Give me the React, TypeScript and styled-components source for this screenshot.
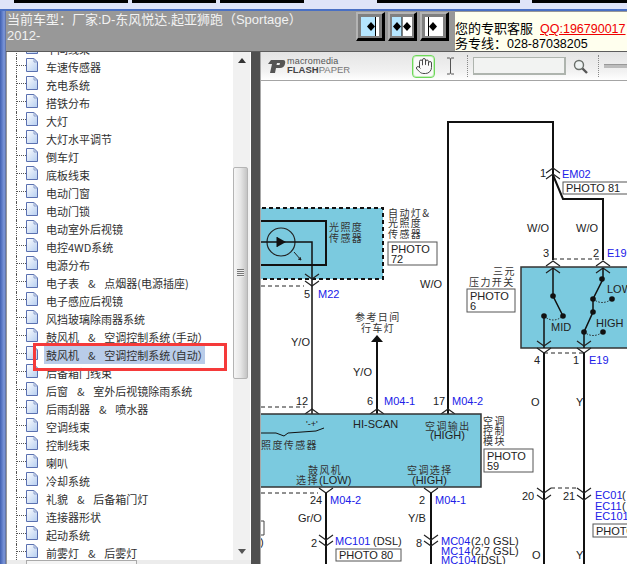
import React from 'react';
import { Hand } from 'lucide-react';
import styled, { createGlobalStyle } from 'styled-components';

const GlobalStyle = createGlobalStyle`
  html, body {
    margin: 0;
    padding: 0;
    background: #fff;
    overflow: hidden;
  }
  * {
    box-sizing: border-box;
  }
`;

const cjk = `'Noto Sans CJK SC', 'Liberation Sans', sans-serif`;
const latin = `'Liberation Sans', 'Noto Sans CJK SC', sans-serif`;

const Page = styled.div`
  width: 627px;
  height: 564px;
  overflow: hidden;
  display: flex;
  flex-direction: column;
  background: #dfe4f8;
  font-family: ${latin};
`;
const TopStrip = styled.div`
  height: 11px;
  flex: none;
  display: flex;
  border-bottom: 2px solid #4a70c4;
`;
const TopTab = styled.div<{ $w: number; $ml: number }>`
  width: ${p => p.$w}px;
  margin-left: ${p => p.$ml}px;
  height: 3px;
  background: #000;
`;
const Body = styled.div`
  flex: 1;
  min-height: 0;
  display: flex;
`;
const LeftEdge = styled.div`
  width: 6px;
  flex: none;
  background: linear-gradient(to right, #3f5fb0, #7d98dc 70%, #5a6a98);
`;
const Main = styled.div`
  flex: 1;
  min-width: 0;
  display: flex;
  flex-direction: column;
  background: #989898;
`;
const Header = styled.div`
  height: 40px;
  flex: none;
  display: flex;
  align-items: flex-start;
`;
const Title = styled.div`
  width: 350px;
  flex: none;
  padding: 1px 0 0 1px;
  color: #f2f2f2;
  font-size: 13px;
  line-height: 16px;
  font-family: ${latin};
`;
const ButtonRow = styled.div`
  display: flex;
  gap: 3px;
  margin-top: 1px;
`;
const DirButton = styled.div`
  width: 29px;
  height: 29px;
  padding: 2px;
  background: #808080;
  border-style: solid;
  border-width: 2px 3px 3px 2px;
  border-color: #b4b4b4 #000 #000 #b4b4b4;
  display: flex;
  align-items: center;
  justify-content: center;
  svg {
    display: block;
  }
`;
const Service = styled.div`
  margin: 1px 0 0 6px;
  flex: 1;
  height: 39px;
  padding-top: 9px;
  background: #ffffee;
  color: #000;
  font-size: 13px;
  line-height: 15px;
  white-space: nowrap;
  overflow: hidden;
`;
const ServiceLine = styled.div`
  height: 15px;
`;
const QQ = styled.span`
  margin-left: 7px;
  font-size: 12.5px;
  color: #f00000;
  text-decoration: underline;
`;
const Phone = styled.span`
  font-size: 12.5px;
`;
const Content = styled.div`
  flex: 1;
  min-height: 0;
  display: flex;
  border-top: 1px solid #5c5c5c;
`;
const TreePanel = styled.div`
  width: 244px;
  flex: none;
  margin-left: 1px;
  display: flex;
  flex-direction: column;
  background: #fff;
`;
const TreeBody = styled.div`
  flex: 1;
  min-height: 0;
  display: flex;
`;
const TreeList = styled.div`
  flex: 1;
  min-width: 0;
  overflow: hidden;
  background: #fff;
`;
const TreeInner = styled.div`
  margin-top: -12px;
`;
const Row = styled.div`
  height: 18px;
  margin-left: 9px;
  display: flex;
  align-items: center;
  border-left: 1px dotted #555;
`;
const Connector = styled.div`
  width: 9px;
  flex: none;
  margin-top: -4px;
  border-top: 1px dotted #555;
`;
const DocIcon = styled.svg`
  width: 12px;
  height: 14px;
  flex: none;
  margin-top: -5px;
`;
const Label = styled.div<{ $selected?: boolean }>`
  margin-left: 6px;
  padding: 0 2px;
  height: 18px;
  line-height: 18px;
  font-family: ${cjk};
  font-size: 11px;
  font-feature-settings: 'palt';
  color: #303030;
  white-space: pre;
  word-spacing: 2px;
  background: ${p => (p.$selected ? '#b9cce9' : 'transparent')};
`;
const Highlight = styled.div`
  position: absolute;
  left: 33px;
  top: 343px;
  width: 194px;
  height: 28px;
  border: 3px solid #f53a3a;
  pointer-events: none;
`;
const VScroll = styled.div`
  width: 18px;
  flex: none;
  display: flex;
  flex-direction: column;
  background: #f1f1f1;
  border-right: 1px solid #fff;
`;
const ArrowCell = styled.div`
  height: 17px;
  flex: none;
  display: flex;
  align-items: center;
  justify-content: center;
`;
const ScrollGap = styled.div<{ $h?: number }>`
  ${p => (p.$h ? `height: ${p.$h}px; flex: none;` : 'flex: 1;')}
`;
const Thumb = styled.div`
  height: 212px;
  flex: none;
  width: 15px;
  display: flex;
  align-items: center;
  justify-content: center;
  border: 1px solid #b4b4b4;
  border-radius: 2px;
  background: linear-gradient(to right, #f6f6f6, #e6e6e6 50%, #c4c4c4);
`;
const Grip = styled.div`
  width: 7px;
  height: 8px;
  background: repeating-linear-gradient(to bottom, #777 0 1px, #eee 1px 2px);
`;
const HScroll = styled.div`
  height: 4px;
  flex: none;
  background: #ececec;
  padding-left: 19px;
`;
const HThumb = styled.div`
  width: 111px;
  height: 4px;
  background: #f4f4f4;
  border: 1px solid #aaa;
  border-bottom: 0;
`;
const Splitter = styled.div`
  width: 9px;
  flex: none;
  background: #505050;
`;
const Viewer = styled.div`
  flex: 1;
  min-width: 0;
  display: flex;
  flex-direction: column;
  background: #fff;
  border-left: 1px solid #a8a8a8;
`;
const Toolbar = styled.div`
  height: 29px;
  flex: none;
  display: flex;
  align-items: center;
  padding-left: 6px;
  overflow: hidden;
  border-bottom: 1px solid #a4a4a4;
  background: linear-gradient(to bottom, #e4e4e4, #f2f2f2 70%, #fff);
`;
const Logo = styled.div`
  display: flex;
  align-items: center;
  gap: 1px;
  width: 145px;
  flex: none;
`;
const LogoText = styled.div`
  display: flex;
  flex-direction: column;
  color: #555;
  font-family: ${latin};
`;
const LogoTop = styled.span`
  font-size: 9px;
  line-height: 8px;
  letter-spacing: 0.2px;
`;
const LogoBottom = styled.span`
  font-size: 9.5px;
  line-height: 10px;
  font-weight: bold;
  color: #444;
  b {
    font-weight: normal;
    color: #777;
  }
`;
const HandButton = styled.div`
  width: 23px;
  height: 23px;
  flex: none;
  border: 1px solid #6ed85a;
  border-radius: 4px;
  box-shadow: 0 0 0 1px #c6efbc inset;
  background: #fafafa;
  display: flex;
  align-items: center;
  justify-content: center;
  color: #444;
`;
const IBeam = styled.svg`
  width: 9px;
  height: 18px;
  flex: none;
  margin-left: 11px;
`;
const DotSep = styled.div<{ $ml: number }>`
  width: 1px;
  height: 22px;
  flex: none;
  margin-left: ${p => p.$ml}px;
  border-left: 1px dotted #888;
`;
const SearchBox = styled.div`
  width: 93px;
  height: 18px;
  flex: none;
  margin-left: 5px;
  border: 1px solid #aeb4ae;
  border-right-width: 2px;
  border-bottom-width: 2px;
  background: #f2f3f2;
`;
const Magnifier = styled.svg`
  width: 15px;
  height: 15px;
  flex: none;
  margin-left: 7px;
`;
const Slider = styled.div`
  width: 30px;
  height: 4px;
  flex: none;
  margin-left: 5px;
  background: #bcbcbc;
  border-top: 1px solid #999;
`;
const Diagram = styled.svg`
  display: block;
  width: 366px;
  height: 483px;
  flex: none;
`;
const Txt = styled.text<{ $blue?: boolean; $size?: number }>`
  font-family: ${latin};
  font-size: ${p => p.$size || 11}px;
  fill: ${p => (p.$blue ? '#2020e8' : '#222')};
`;
const CnTxt = styled.text`
  font-family: ${cjk};
  font-size: 10px;
  letter-spacing: 1.4px;
  fill: #333;
`;
const Wire = styled.path<{ $w?: number }>`
  fill: none;
  stroke: #111;
  stroke-width: ${p => p.$w || 1.5}px;
`;
const Dash = styled.path`
  fill: none;
  stroke: #222;
  stroke-width: 1px;
  stroke-dasharray: 4 3;
`;
const Fill = styled.rect`
  fill: #7bcadf;
  stroke: #333;
  stroke-width: 1.5px;
`;
const DashFill = styled.rect`
  fill: #7bcadf;
  stroke: #111;
  stroke-width: 2px;
  stroke-dasharray: 4 3;
`;
const PhotoRect = styled.rect`
  fill: #fff;
  stroke: #555;
  stroke-width: 1px;
`;
const Chev = styled.path`
  fill: none;
  stroke: #222;
  stroke-width: 1.2px;
`;
const Dot = styled.circle`
  fill: #111;
`;

const items = [
  '中间线束',
  '车速传感器',
  '充电系统',
  '搭铁分布',
  '大灯',
  '大灯水平调节',
  '倒车灯',
  '底板线束',
  '电动门窗',
  '电动门锁',
  '电动室外后视镜',
  '电控4WD系统',
  '电源分布',
  '电子表  &  点烟器(电源插座)',
  '电子感应后视镜',
  '风挡玻璃除雨器系统',
  '鼓风机  &  空调控制系统（手动）',
  '鼓风机  &  空调控制系统（自动）',
  '后备箱门线束',
  '后窗  &  室外后视镜除雨系统',
  '后雨刮器  &  喷水器',
  '空调线束',
  '控制线束',
  '喇叭',
  '冷却系统',
  '礼貌  &  后备箱门灯',
  '连接器形状',
  '起动系统',
  '前雾灯  &  后雾灯'
];

const Doc = () => (
  <DocIcon viewBox="0 0 12 14">
    <defs>
      <linearGradient id="docfill" x1="0" y1="0" x2="1" y2="1">
        <stop offset="0" stopColor="#ffffff" />
        <stop offset="1" stopColor="#b4cdf0" />
      </linearGradient>
    </defs>
    <path d="M.5.5H8L11.5 4V13.5H.5Z" fill="url(#docfill)" stroke="#5a70b0" />
    <path d="M8 .5V4H11.5" fill="none" stroke="#8ea0cc" />
  </DocIcon>
);

const up = (x: number, y: number) => `M${x - 7} ${y + 5}L${x} ${y}L${x + 7} ${y + 5}`;
const down = (x: number, y: number) => `M${x - 7} ${y}L${x} ${y + 5}L${x + 7} ${y}`;

const Photo: React.FC<{ x: number; y: number; w: number; h: number; lines: string[] }> = ({
  x,
  y,
  w,
  h,
  lines
}) => (
  <>
    <PhotoRect x={x} y={y} width={w} height={h} />
    {lines.map((l, i) => (
      <Txt key={l} x={x + 3} y={y + 11 + i * 10}>
        {l}
      </Txt>
    ))}
  </>
);

const WiringDiagram = () => (
  <Diagram viewBox="261 81 366 483">
    {/* light sensor */}
    <DashFill x="255" y="208" width="128" height="71" />
    <Wire $w={2} d="M255 221H326V265H255" />
    <circle cx="281" cy="242" r="14" fill="none" stroke="#222" strokeWidth="1.2" />
    <Wire d="M255 242H312V320" />
    <path d="M277 237L286 242L277 247Z" fill="#111" />
    <path d="M277 237V247" stroke="#111" />
    <path d="M294 252L301 260M298 259L301 260L300 257" stroke="#222" fill="none" />
    <Chev d={down(312, 274)} />
    <Chev d={down(312, 281)} />
    <Dash d="M261 286H304" />
    <CnTxt x="329" y="231">光照度</CnTxt>
    <CnTxt x="329" y="242">传感器</CnTxt>
    <CnTxt x="388" y="217">自动灯&amp;</CnTxt>
    <CnTxt x="388" y="227">光照度</CnTxt>
    <CnTxt x="388" y="238">传感器</CnTxt>
    <Photo x={388} y={242} w={49} h={23} lines={['PHOTO', '72']} />
    <Txt x="304" y="298">5</Txt>
    <Txt x="318" y="298" $blue>M22</Txt>
    <Txt x="420" y="288">W/O</Txt>

    {/* day running light */}
    <CnTxt x="355" y="321">参考日间</CnTxt>
    <CnTxt x="361" y="332">行车灯</CnTxt>
    <path d="M377 335L383 342H371Z" fill="#111" />
    <Wire $w={2} d="M377 341V414" />
    <Wire d="M312 320V414" />
    <Txt x="291" y="346">Y/O</Txt>
    <Txt x="353" y="376">Y/O</Txt>

    {/* feed */}
    <Wire $w={2} d="M448 414V122H553V260" />
    <Wire $w={2} d="M553 175L563 199H603V260" />
    <Chev d={up(553, 168)} />
    <Chev d={up(553, 174)} />
    <Txt x="540" y="177">1</Txt>
    <Txt x="562" y="178" $blue>EM02</Txt>
    <Photo x={563} y={182} w={70} h={12} lines={[]} />
    <Txt x="566" y="192">PHOTO 81</Txt>
    <Txt x="527" y="232">W/O</Txt>
    <Txt x="576" y="232">W/O</Txt>
    <Txt x="543" y="257">3</Txt>
    <Txt x="593" y="257">2</Txt>
    <Txt x="607" y="257" $blue>E19</Txt>
    <Dash d="M553 259H603" />

    {/* pressure switch */}
    <CnTxt x="493" y="275">三元</CnTxt>
    <CnTxt x="469" y="286">压力开关</CnTxt>
    <Photo x={467} y={289} w={48} h={23} lines={['PHOTO', '6']} />
    <Fill x="521" y="267" width="120" height="81" />
    <Chev d={up(553, 261)} />
    <Chev d={up(603, 261)} />
    <Chev d={up(553, 268)} />
    <Chev d={up(603, 268)} />
    <Wire d="M553 268V296L563 316" />
    <Wire d="M544 316V348" />
    <Wire d="M603 268V279L593 299V312L584 332V348" />
    <path d="M544 316Q553 324 563 316M593 299Q602 306 612 299M584 332Q593 339 603 332" fill="none" stroke="#222" strokeDasharray="1.5 1.5" />
    {[[553, 296], [563, 316], [544, 316], [602, 279], [593, 299], [612, 299], [593, 312], [584, 332], [603, 332]].map(([x, y]) => (
      <Dot key={`${x}-${y}`} cx={x} cy={y} r="2.8" />
    ))}
    <Txt x="551" y="331">MID</Txt>
    <Txt x="596" y="327">HIGH</Txt>
    <Txt x="607" y="293">LOW</Txt>
    <Chev d={down(544, 341)} />
    <Chev d={down(584, 341)} />
    <Chev d={down(544, 348)} />
    <Chev d={down(584, 348)} />
    <Dash d="M544 353H584" />
    <Txt x="534" y="364">4</Txt>
    <Txt x="573" y="364">1</Txt>
    <Txt x="589" y="364" $blue>E19</Txt>
    <Wire $w={2} d="M544 353V564" />
    <Wire $w={2} d="M584 353V564" />
    <Txt x="531" y="406">O</Txt>
    <Txt x="576" y="406">Y</Txt>
    <Chev d={down(544, 488)} />
    <Chev d={down(584, 488)} />
    <Chev d={down(544, 495)} />
    <Chev d={down(584, 495)} />
    <Dash d="M551 488H577" />
    <Txt x="522" y="500">20</Txt>
    <Txt x="563" y="500">21</Txt>
    <Txt x="595" y="499" $blue>EC01</Txt>
    <Txt x="622" y="499">(</Txt>
    <Txt x="595" y="510" $blue>EC11</Txt>
    <Txt x="622" y="510">(</Txt>
    <Txt x="595" y="520" $blue>EC101</Txt>
    <Photo x={593} y={524} w={50} h={13} lines={['PHOTO']} />
    <Txt x="532" y="559">O</Txt>
    <Txt x="576" y="559">Y</Txt>

    {/* control module */}
    <Dash d="M261 407H305" />
    <Chev d={up(312, 409)} />
    <Chev d={up(377, 409)} />
    <Chev d={up(448, 409)} />
    <Txt x="296" y="405">12</Txt>
    <Txt x="367" y="405">6</Txt>
    <Txt x="384" y="405" $blue>M04-1</Txt>
    <Txt x="433" y="405">17</Txt>
    <Txt x="452" y="405" $blue>M04-2</Txt>
    <Fill x="255" y="414" width="226" height="73" />
    <Txt x="306" y="427" $size={9}>'-+'</Txt>
    <Wire $w={1} d="M261 433H276L284 436L288 433L316 431L324 428" />
    <Txt x="353" y="428">HI-SCAN</Txt>
    <CnTxt x="425" y="430">空调输出</CnTxt>
    <Txt x="430" y="439">(HIGH)</Txt>
    <CnTxt x="261" y="449">照度传感器</CnTxt>
    <CnTxt x="308" y="474">鼓风机</CnTxt>
    <CnTxt x="296" y="484">选择</CnTxt>
    <Txt x="319" y="484">(LOW)</Txt>
    <CnTxt x="407" y="474">空调选择</CnTxt>
    <Txt x="412" y="484">(HIGH)</Txt>
    <CnTxt x="483" y="425">空调</CnTxt>
    <CnTxt x="483" y="435">控制</CnTxt>
    <CnTxt x="483" y="445">模块</CnTxt>
    <Photo x={484} y={449} w={49} h={23} lines={['PHOTO', '59']} />

    {/* module outputs */}
    <Chev d={down(326, 488)} />
    <Chev d={down(431, 488)} />
    <Dash d="M261 493H318" />
    <Wire $w={2} d="M326 493V564" />
    <Wire $w={2} d="M431 493V564" />
    <Txt x="310" y="504">24</Txt>
    <Txt x="330" y="504" $blue>M04-2</Txt>
    <Txt x="419" y="504">2</Txt>
    <Txt x="435" y="504" $blue>M04-1</Txt>
    <Txt x="298" y="522">Gr/O</Txt>
    <Txt x="408" y="522">Y/B</Txt>
    <Chev d={down(326, 535)} />
    <Chev d={down(326, 541)} />
    <Chev d={down(431, 535)} />
    <Chev d={down(431, 541)} />
    <Txt x="311" y="547">2</Txt>
    <Txt x="335" y="545" $blue>MC101</Txt>
    <Txt x="373" y="545">(DSL)</Txt>
    <Photo x={336} y={549} w={65} h={12} lines={[]} />
    <Txt x="339" y="559">PHOTO 80</Txt>
    <Txt x="416" y="547">8</Txt>
    <Txt x="441" y="545" $blue>MC04</Txt>
    <Txt x="471" y="545">(2,0 GSL)</Txt>
    <Txt x="441" y="555" $blue>MC14</Txt>
    <Txt x="471" y="555">(2,7 GSL)</Txt>
    <Txt x="441" y="564" $blue>MC104</Txt>
    <Txt x="477" y="564">(DSL)</Txt>
    <path d="M261 521H264V535H261" fill="none" stroke="#444" />
    <Txt x="260" y="546">)</Txt>
  </Diagram>
);

export default function App() {
  return (
    <Page>
      <GlobalStyle />
      <TopStrip>
        <TopTab $ml={14} $w={114} />
        <TopTab $ml={4} $w={84} />
        <TopTab $ml={4} $w={84} />
        <TopTab $ml={73} $w={143} />
        <TopTab $ml={12} $w={95} />
      </TopStrip>
      <Body>
        <LeftEdge />
        <Main>
          <Header>
            <Title>
              当前车型：厂家:D-东风悦达.起亚狮跑（Sportage）
              <br />
              2012-
            </Title>
            <ButtonRow>
              <DirButton>
                <svg width="18" height="19" viewBox="0 0 18 19">
                  <rect width="18" height="19" fill="#b5e6ff" />
                  <rect x="15" width="3" height="19" fill="#fff" />
                  <rect x="14" width="1" height="19" fill="#000" />
                  <path d="M10 5L14 9.5L10 14L6 9.5Z" fill="#000" />
                </svg>
              </DirButton>
              <DirButton>
                <svg width="20" height="19" viewBox="0 0 20 19">
                  <rect width="10" height="19" fill="#b5e6ff" />
                  <rect x="10" width="10" height="19" fill="#fff" />
                  <rect x="9.5" width="1" height="19" fill="#000" />
                  <path d="M5 5L9 9.5L5 14L1 9.5Z" fill="#000" />
                  <path d="M15 5L19 9.5L15 14L11 9.5Z" fill="#000" />
                </svg>
              </DirButton>
              <DirButton>
                <svg width="18" height="19" viewBox="0 0 18 19">
                  <rect width="18" height="19" fill="#fff" />
                  <rect x="3" width="1" height="19" fill="#000" />
                  <path d="M8 5L12 9.5L8 14L4 9.5Z" fill="#000" />
                </svg>
              </DirButton>
            </ButtonRow>
            <Service>
              <ServiceLine>
                您的专职客服<QQ>QQ:196790017</QQ>
              </ServiceLine>
              <ServiceLine>
                务专线：<Phone>028-87038205</Phone>
              </ServiceLine>
            </Service>
          </Header>
          <Content>
            <TreePanel>
              <TreeBody>
                <TreeList>
                  <TreeInner>
                    {items.map((item, i) => (
                      <Row key={item}>
                        <Connector />
                        <Doc />
                        <Label $selected={i === 17}>{item}</Label>
                      </Row>
                    ))}
                  </TreeInner>
                </TreeList>
                <VScroll>
                  <ArrowCell>
                    <svg width="8" height="5" viewBox="0 0 8 5">
                      <path d="M4 0L8 5H0Z" fill="#333" />
                    </svg>
                  </ArrowCell>
                  <ScrollGap $h={98} />
                  <Thumb>
                    <Grip />
                  </Thumb>
                  <ScrollGap />
                  <ArrowCell>
                    <svg width="8" height="5" viewBox="0 0 8 5">
                      <path d="M0 0H8L4 5Z" fill="#555" />
                    </svg>
                  </ArrowCell>
                </VScroll>
              </TreeBody>
              <HScroll>
                <HThumb />
              </HScroll>
            </TreePanel>
            <Splitter />
            <Viewer>
              <Toolbar>
                <Logo>
                  <svg width="19" height="15" viewBox="0 0 19 15">
                    <path d="M4 1H16Q19 1 18 5Q17 9 13 9H9L8 14H3L5 5H1Z" fill="#555" />
                    <path d="M10 4H13L12.5 6H9.5Z" fill="#ececec" />
                  </svg>
                  <LogoText>
                    <LogoTop>macromedia</LogoTop>
                    <LogoBottom>
                      FLASH<b>PAPER</b>
                    </LogoBottom>
                  </LogoText>
                </Logo>
                <HandButton>
                  <Hand size={18} strokeWidth={1.3} />
                </HandButton>
                <IBeam viewBox="0 0 9 18">
                  <path d="M1 1H3.5Q4.5 1 4.5 3V15Q4.5 17 3.5 17H1M8 1H5.5Q4.5 1 4.5 3M4.5 15Q4.5 17 5.5 17H8" fill="none" stroke="#555" />
                </IBeam>
                <DotSep $ml={12} />
                <SearchBox />
                <Magnifier viewBox="0 0 15 15">
                  <circle cx="6" cy="6" r="4.5" fill="#eef2f2" stroke="#6a6f6a" strokeWidth="1.4" />
                  <path d="M9.5 9.5L14 14" stroke="#555" strokeWidth="2.4" />
                </Magnifier>
                <DotSep $ml={10} />
                <Slider />
              </Toolbar>
              <WiringDiagram />
            </Viewer>
          </Content>
        </Main>
      </Body>
      <Highlight />
    </Page>
  );
}
